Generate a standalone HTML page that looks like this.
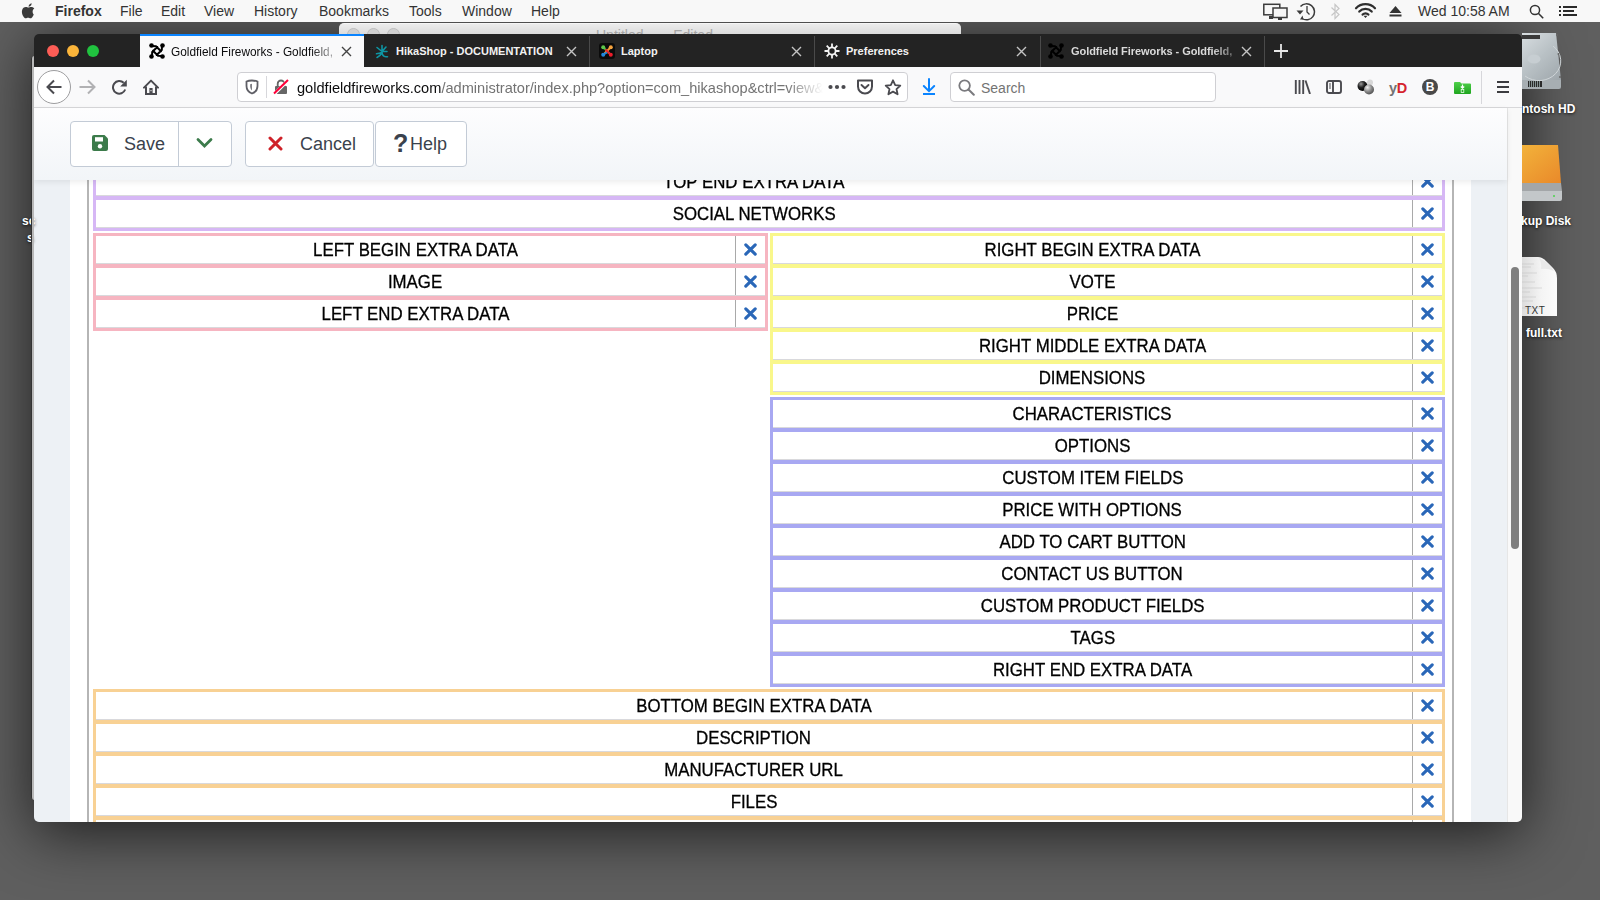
<!DOCTYPE html>
<html><head><meta charset="utf-8">
<style>
*{box-sizing:border-box;margin:0;padding:0}
html,body{width:1600px;height:900px;overflow:hidden}
body{position:relative;background:#5d5d5d;font-family:"Liberation Sans",sans-serif}
.abs{position:absolute}
#desk{position:absolute;left:0;top:22px;width:1600px;height:878px;background:#5f5f5f}
#menubar{position:absolute;z-index:5;left:0;top:0;width:1600px;height:22px;background:#f8f8f8;color:#333;font-size:14px}
#menubar span{position:absolute;top:3px;white-space:nowrap}
#bgwin{position:absolute;z-index:3;overflow:hidden;left:339px;top:23px;width:622px;height:11px;background:linear-gradient(#ececec,#dcdcdc);border-radius:5px 5px 0 0;border-top:1px solid #f6f6f6}
#bgwin i{position:absolute;top:4px;width:13px;height:13px;border-radius:50%;background:#d0d0d0;border:1px solid #bdbdbd}
#win{position:absolute;left:34px;top:34px;width:1488px;height:788px;overflow:hidden;border-radius:5px;box-shadow:0 10px 60px rgba(0,0,0,.7)}
#wi{position:absolute;left:-34px;top:-34px;width:1600px;height:900px}
#tabbar{position:absolute;left:34px;top:34px;width:1488px;height:33px;background:#232323}
.light{position:absolute;top:45px;width:12px;height:12px;border-radius:50%}
.tabt{position:absolute;top:44px;font-size:11px;font-weight:bold;color:#f2f2f2;white-space:nowrap;overflow:hidden}
.sep{position:absolute;top:36px;width:1px;height:31px;background:#4a4a4a}
.tx{position:absolute;top:45px;width:11px;height:11px}
.tx path{stroke:#c4c4c4;stroke-width:1.4;fill:none}
#navbar{position:absolute;left:34px;top:67px;width:1488px;height:41px;background:#f9f9fa;border-bottom:1px solid #d8d8da}
#urlbar{position:absolute;left:237px;top:72px;width:671px;height:30px;background:#fff;border:1px solid #cfcfd3;border-radius:4px}
#search{position:absolute;left:950px;top:72px;width:266px;height:30px;background:#fff;border:1px solid #cfcfd3;border-radius:4px}
.ico{position:absolute}
#content{position:absolute;left:34px;top:108px;width:1473px;height:714px;background:#edf1f5}
#sbar{position:absolute;left:1507px;top:108px;width:15px;height:714px;background:#f9f9f9;border-left:1px solid #e6e6e6}
#thumb{position:absolute;left:1511px;top:267px;width:8px;height:282px;background:#7f7f7f;border-radius:4px}
#toolbar{position:absolute;left:34px;top:108px;width:1473px;height:72px;background:linear-gradient(#fdfdfe,#f2f5f8);box-shadow:0 2px 6px rgba(0,0,0,.08)}
.btn{position:absolute;top:121px;height:46px;background:#fff;border:1px solid #c3cbd6;border-radius:4px;color:#3a424d;font-size:18px}
.btn span{position:absolute;top:12px;white-space:nowrap}
.grp{position:absolute;padding:3px;display:flex;flex-direction:column;gap:4px}
.row{height:28px;background:#fff;border-bottom:1px solid #d9d9dc;display:flex}
.row .t{flex:1;border-right:1px solid #a9a9a9;text-align:center;font-size:18px;line-height:29px;height:27px;color:#000;white-space:nowrap}
.row .t b{font-weight:normal;display:inline-block;transform:scaleX(0.935);-webkit-text-stroke:0.3px #000}
.row .d{width:29px;display:flex;align-items:center;justify-content:center;height:27px}
.row .d svg path{stroke:#2a67b8;stroke-width:3.1;stroke-linecap:round;fill:none}
.dlab{position:absolute;color:#fff;font-size:12px;font-weight:bold;text-shadow:0 1px 3px rgba(0,0,0,.8);white-space:nowrap}
</style></head><body>
<div id="desk"></div>
<div id="menubar">
<svg class="abs" style="left:21px;top:3px" width="14" height="16" viewBox="0 0 14 16"><path fill="#3a3a3a" d="M11.6 8.5c0-2 1.6-2.9 1.7-3-0.9-1.4-2.4-1.6-2.9-1.6-1.2-0.1-2.4 0.7-3 0.7-0.6 0-1.6-0.7-2.6-0.7C3.400 4 2.100 4.700 1.500 5.900 0.200 8.200 1.100 11.600 2.400 13.400 3 14.300 3.800 15.300 4.700 15.300c0.900 0 1.300-0.600 2.400-0.600 1.100 0 1.400 0.600 2.400 0.600 1 0 1.600-0.900 2.200-1.800 0.700-1 1-2 1-2.100C12.700 11.400 11.600 10.800 11.600 8.500zM9.800 2.600C10.300 2 10.700 1.100 10.600 0.200 9.800 0.300 8.900 0.800 8.400 1.400 7.900 2 7.500 2.800 7.600 3.700 8.500 3.800 9.300 3.200 9.800 2.600z"/></svg>
<span style="left:55px;font-weight:bold">Firefox</span>
<span style="left:120px">File</span>
<span style="left:161px">Edit</span>
<span style="left:204px">View</span>
<span style="left:254px">History</span>
<span style="left:319px">Bookmarks</span>
<span style="left:409px">Tools</span>
<span style="left:462px">Window</span>
<span style="left:531px">Help</span>
<span style="left:1418px">Wed 10:58 AM</span>
<svg class="abs" style="left:1262px;top:3px" width="26" height="17" viewBox="0 0 26 17"><rect x="1.8" y="1.3" width="16" height="10.5" fill="none" stroke="#3b3b3b" stroke-width="1.5"/><rect x="11" y="5" width="14" height="9.5" fill="#f5f5f5" stroke="#3b3b3b" stroke-width="1.5"/><rect x="7" y="13" width="4" height="3" fill="#3b3b3b"/><rect x="16" y="15" width="4" height="2" fill="#3b3b3b"/></svg>
<svg class="abs" style="left:1295px;top:2px" width="22" height="19" viewBox="0 0 22 19"><path d="M5.5 4.5A8 8 0 1 1 7 16.5" fill="none" stroke="#3b3b3b" stroke-width="1.5"/><path d="M1.5 8.5H8.5L5 12.5Z" fill="#3b3b3b"/><path d="M12 4V10L14.5 12.5" fill="none" stroke="#3b3b3b" stroke-width="1.3"/><path d="M5 17.5L7.5 13.5L8.5 17.5Z" fill="#3b3b3b"/></svg>
<svg class="abs" style="left:1330px;top:3px" width="11" height="17" viewBox="0 0 11 17"><path d="M1.5 4.5L9 11.5L5 15.5V1.5L9 5.5L1.5 12.5" fill="none" stroke="#c6c6c6" stroke-width="1.2"/></svg>
<svg class="abs" style="left:1354px;top:2px" width="23" height="17" viewBox="0 0 23 17"><g fill="none" stroke="#2f2f2f" stroke-width="2.2" stroke-linecap="round"><path d="M2 6.3A13 13 0 0 1 21 6.3"/><path d="M5.3 9.6A8.5 8.5 0 0 1 17.7 9.6"/><path d="M8.6 12.6A4 4 0 0 1 14.4 12.6"/></g><path d="M9.5 13.7L11.5 16L13.5 13.7Z" fill="#2f2f2f"/></svg>
<svg class="abs" style="left:1389px;top:5px" width="13" height="12" viewBox="0 0 13 12"><path d="M6.5 1L12.5 8H0.5Z" fill="#333"/><rect x="0.5" y="9.5" width="12" height="2" fill="#333"/></svg>
<svg class="abs" style="left:1529px;top:4px" width="16" height="16" viewBox="0 0 16 16"><circle cx="6" cy="6" r="4.6" fill="none" stroke="#333" stroke-width="1.5"/><path d="M9.3 9.3L14.2 14.2" stroke="#333" stroke-width="1.6"/></svg>
<svg class="abs" style="left:1558px;top:5px" width="20" height="12" viewBox="0 0 20 12"><g fill="#2a2a2a"><rect x="1" y="1" width="2" height="2"/><rect x="1" y="5" width="2" height="2"/><rect x="1" y="9" width="2" height="2"/><rect x="5" y="1" width="14" height="2"/><rect x="5" y="5" width="11" height="2"/><rect x="5" y="9" width="14" height="2"/></g></svg>
</div>
<div id="bgwin"><i style="left:8px"></i><i style="left:28px"></i><i style="left:48px"></i>
<span class="abs" style="left:257px;top:3px;font-size:14px;color:#a5a5a5;white-space:nowrap">Untitled <span style="margin:0 4px">&mdash;</span> Edited &#8964;</span></div>
<div class="abs" style="z-index:3;left:1522px;top:22px;width:78px;height:878px;overflow:hidden">
<svg class="abs" style="left:-11px;top:10px" width="52" height="58" viewBox="0 0 52 58"><defs><linearGradient id="hd1" x1="0" y1="0" x2="1" y2="1"><stop offset="0" stop-color="#dfe4e7"/><stop offset=".55" stop-color="#b9c1c5"/><stop offset="1" stop-color="#9ea6ab"/></linearGradient></defs><path d="M1 1H45L50 48H1Z" fill="url(#hd1)"/><path d="M1 48H50V55Q50 57 48 57H1Z" fill="#a7aeb2"/><rect x="17" y="49" width="14" height="6" fill="#2a2a2a"/><path d="M18.5 49V55M20.5 49V55M22.5 49V55M24.5 49V55M26.5 49V55M28.5 49V55" stroke="#9aa" stroke-width=".8"/><rect x="9" y="3" width="20" height="4" fill="#3a3a3a"/><path d="M42 14A20 18 0 0 1 14 44" fill="none" stroke="#cfd5d8" stroke-width="1"/><ellipse cx="23" cy="27" rx="6.5" ry="4.5" fill="#c7ced2"/><circle cx="46" cy="3" r="1" fill="#666"/><circle cx="47.5" cy="22" r="1" fill="#666"/><circle cx="49" cy="45" r="1" fill="#666"/></svg>
<svg class="abs" style="left:-8px;top:122px" width="50" height="60" viewBox="0 0 50 60"><defs><linearGradient id="bd1" x1="0" y1="0" x2="1" y2="1"><stop offset="0" stop-color="#f3b63c"/><stop offset="1" stop-color="#e9892a"/></linearGradient></defs><path d="M2 1H44L47 39H0Z" fill="url(#bd1)"/><path d="M0 39H47L48 47H0Z" fill="#a3a6a8"/><path d="M0 47H48V55Q48 57 46 57H2Q0 57 0 55Z" fill="#c3c7c9"/><circle cx="40" cy="52" r="1" fill="#4bd34b"/></svg>
<svg class="abs" style="left:-6px;top:234px" width="42" height="62" viewBox="0 0 42 62"><defs><linearGradient id="dc1" x1="0" y1="0" x2="1" y2="0"><stop offset="0" stop-color="#d6d6d6"/><stop offset=".6" stop-color="#f4f4f4"/><stop offset="1" stop-color="#fbfbfb"/></linearGradient></defs><path d="M1 1H22Q26 1 30 5L37 12Q41 16 41 22V60H1Z" fill="url(#dc1)"/><path d="M23 2Q26 8 25 13Q31 12 38 15Q34 7 23 2Z" fill="#e9e9e9"/><path d="M5 8H18M5 11H15M5 17H21M5 20H12M5 26H19M5 32H26M5 36H14M5 41H20M5 45H17M5 52H24" stroke="#bdbdbd" stroke-width=".5"/><text x="9" y="58" font-family="Liberation Sans" font-size="10" fill="#333" letter-spacing=".5">TXT</text></svg>
<div class="dlab" style="left:0px;top:80px">ntosh HD</div>
<div class="dlab" style="left:-1px;top:192px">kup Disk</div>
<div class="dlab" style="left:4px;top:304px">full.txt</div>
</div>
<div class="dlab" style="z-index:3;left:22px;top:214px;font-size:12px">sc</div><div class="dlab" style="z-index:3;left:27px;top:231px;font-size:12px">s</div>
<div class="abs" style="z-index:3;left:31px;top:56px;width:3px;height:744px;background:#b8b8b8;border-radius:4px 0 0 4px;border-left:1px solid #333"></div>
<div id="win"><div id="wi">
<div id="tabbar"></div>
<div class="light" style="left:47px;background:#fd5d56"></div>
<div class="light" style="left:67px;background:#fbb53a"></div>
<div class="light" style="left:87px;background:#20c23f"></div>
<div class="abs" style="left:140px;top:34px;width:224px;height:33px;background:#f9f9fa;border-top:2px solid #0a84ff"></div>
<svg class="ico" style="left:149px;top:43px" width="16" height="16" viewBox="0 0 16 16"><g fill="none" stroke="#000" stroke-width="2" stroke-linecap="round" stroke-linejoin="round"><path d="M2.5 3L7 3.2L12 8.3M13 2.5L12.8 7L7.7 12M13.5 13L9 12.8L4 7.7M3 13.5L3.2 9L8.3 4"/></g><g fill="#000"><circle cx="2.5" cy="2.5" r="2.3"/><circle cx="13.5" cy="2.5" r="2.3"/><circle cx="2.5" cy="13.5" r="2.3"/><circle cx="13.5" cy="13.5" r="2.3"/></g></svg>
<div class="tabt" style="left:171px;color:#0c0c0d;font-weight:normal;font-size:11.85px;top:45px;width:164px;-webkit-mask-image:linear-gradient(90deg,#000 85%,rgba(0,0,0,.4) 97%)">Goldfield Fireworks - Goldfield,</div>
<svg class="tx" style="left:341px;top:46px"><path d="M1 1L10 10M10 1L1 10" style="stroke:#444"/></svg>
<svg class="ico" style="left:374px;top:43px" width="16" height="16" viewBox="0 0 16 16"><g fill="none" stroke="#0e95a3" stroke-width="1.6" stroke-linecap="round"><path d="M8 2.5V8.5Q8 13.5 12 13.8H13.5M3 4.5L8 8.5M12 4L8 8.5M8 8.5H13M7.7 9.5Q5.5 10.5 2.5 10.8M7.5 10.5Q6 13 3 14.5"/></g></svg>
<div class="tabt" style="left:396px;top:45px">HikaShop - DOCUMENTATION</div>
<svg class="tx" style="left:566px;top:46px"><path d="M1 1L10 10M10 1L1 10"/></svg>
<div class="sep" style="left:589px"></div>
<svg class="ico" style="left:599px;top:43px" width="16" height="16" viewBox="0 0 16 16"><rect x="0" y="0" width="16" height="16" rx="3" fill="#0b0b0b"/><g fill="none" stroke-width="2" stroke-linecap="round"><path d="M4.5 4.5L10 10" stroke="#4cb83b"/><path d="M11.5 4.5L6 10" stroke="#f39b35"/><path d="M4.5 11.5L9 9" stroke="#1c7fd3"/><path d="M11.5 11.5L7 7" stroke="#e8202a"/></g><circle cx="4.2" cy="4.2" r="2" fill="#5fc54a"/><circle cx="11.8" cy="4.2" r="2" fill="#f6a33e"/><circle cx="4.2" cy="11.8" r="2" fill="#1f86dc"/><circle cx="11.8" cy="11.8" r="2" fill="#ec1c2a"/></svg>
<div class="tabt" style="left:621px;top:45px">Laptop</div>
<svg class="tx" style="left:791px;top:46px"><path d="M1 1L10 10M10 1L1 10"/></svg>
<div class="sep" style="left:814px"></div>
<svg class="ico" style="left:824px;top:43px" width="16" height="16" viewBox="0 0 16 16"><g fill="none" stroke="#f4f4f4" stroke-width="1.8"><circle cx="8" cy="8" r="3.6"/><path d="M8 0.5V4M8 12V15.5M0.5 8H4M12 8H15.5M2.7 2.7L5.3 5.3M10.7 10.7L13.3 13.3M13.3 2.7L10.7 5.3M5.3 10.7L2.7 13.3"/></g></svg>
<div class="tabt" style="left:846px;top:45px">Preferences</div>
<svg class="tx" style="left:1016px;top:46px"><path d="M1 1L10 10M10 1L1 10"/></svg>
<div class="sep" style="left:1040px"></div>
<svg class="ico" style="left:1048px;top:43px" width="16" height="16" viewBox="0 0 16 16"><g fill="none" stroke="#000" stroke-width="2" stroke-linecap="round" stroke-linejoin="round"><path d="M2.5 3L7 3.2L12 8.3M13 2.5L12.8 7L7.7 12M13.5 13L9 12.8L4 7.7M3 13.5L3.2 9L8.3 4"/></g><g fill="#000"><circle cx="2.5" cy="2.5" r="2.3"/><circle cx="13.5" cy="2.5" r="2.3"/><circle cx="2.5" cy="13.5" r="2.3"/><circle cx="13.5" cy="13.5" r="2.3"/></g></svg>
<div class="tabt" style="left:1071px;top:45px;width:166px;letter-spacing:-0.06px;color:#dadada;-webkit-mask-image:linear-gradient(90deg,#000 85%,rgba(0,0,0,.4) 97%)">Goldfield Fireworks - Goldfield,</div>
<svg class="tx" style="left:1241px;top:46px"><path d="M1 1L10 10M10 1L1 10"/></svg>
<div class="sep" style="left:1264px"></div>
<svg class="ico" style="left:1273px;top:43px" width="16" height="16"><path d="M8 1V15M1 8H15" stroke="#e8e8e8" stroke-width="1.8"/></svg>
<div id="navbar"></div>
<div class="abs" style="left:37px;top:70px;width:34px;height:34px;border-radius:50%;border:1px solid #9d9d9f;background:#fff"></div>
<svg class="ico" style="left:46px;top:79px" width="16" height="16" viewBox="0 0 16 16"><path d="M1.5 8H15.5M8 1.5L1.5 8L8 14.5" fill="none" stroke="#4a4a4f" stroke-width="2"/></svg>
<svg class="ico" style="left:79px;top:79px" width="17" height="16" viewBox="0 0 17 16"><path d="M0.5 8H15M9 1.5L15.5 8L9 14.5" fill="none" stroke="#b1b1b3" stroke-width="2"/></svg>
<svg class="ico" style="left:111px;top:79px" width="17" height="16" viewBox="0 0 17 16"><path d="M14.2 10.5A6.3 6.3 0 1 1 12.7 3.8" fill="none" stroke="#4a4a4f" stroke-width="2"/><path d="M15.8 0.8V7.5H9.2Z" fill="#4a4a4f"/></svg>
<svg class="ico" style="left:143px;top:79px" width="16" height="16" viewBox="0 0 16 16"><path d="M1 8.6L8 1.6L15 8.6" fill="none" stroke="#4a4a4f" stroke-width="2" stroke-linejoin="round" stroke-linecap="round"/><path d="M3 7.5V15H13V7.5" fill="none" stroke="#4a4a4f" stroke-width="2"/><rect x="6.4" y="9" width="3.2" height="6" fill="#4a4a4f"/><rect x="7.5" y="11" width="1" height="1.2" fill="#fff"/></svg>
<div id="urlbar"></div>
<svg class="ico" style="left:245px;top:79px" width="14" height="16" viewBox="0 0 14 16"><path d="M7 1.5Q10.5 1.5 12.5 2.5V7Q12.5 12.5 7 14.5Q1.5 12.5 1.5 7V2.5Q3.5 1.5 7 1.5Z" fill="none" stroke="#5f5f66" stroke-width="1.8"/><path d="M5.3 5.3L6.8 4.8V11.5Q5.6 10 5.3 8Z" fill="#5f5f66"/></svg>
<div class="abs" style="left:266px;top:76px;width:1px;height:22px;background:#d7d7db"></div>
<svg class="ico" style="left:273px;top:79px" width="16" height="16" viewBox="0 0 16 16"><path d="M4.7 7V4.8A3.3 3.3 0 0 1 11.3 4.8V7" fill="none" stroke="#666" stroke-width="1.8"/><rect x="2" y="7" width="12" height="8" rx="1" fill="#666"/><path d="M1.5 14.8L15 1.5" stroke="#fff" stroke-width="3.2"/><path d="M1 14.5L15 1" stroke="#ff0039" stroke-width="2"/></svg>
<div class="abs" style="left:297px;top:80px;font-size:14.6px;color:#0c0c0d;white-space:nowrap;width:526px;overflow:hidden;-webkit-mask-image:linear-gradient(90deg,#000 93%,transparent)">goldfieldfireworks.com<span style="color:#737373">/administrator/index.php?option=com_hikashop&amp;ctrl=view&amp;task=edit</span></div>
<svg class="ico" style="left:828px;top:84px" width="18" height="6"><circle cx="2.5" cy="3" r="2.1" fill="#4a4a4f"/><circle cx="9" cy="3" r="2.1" fill="#4a4a4f"/><circle cx="15.5" cy="3" r="2.1" fill="#4a4a4f"/></svg>
<svg class="ico" style="left:856px;top:79px" width="18" height="16" viewBox="0 0 18 16"><path d="M2 1.5H16V7.5A7 7 0 0 1 2 7.5Z" fill="none" stroke="#4a4a4f" stroke-width="2" stroke-linejoin="round"/><path d="M5.5 6L9 9.3L12.5 6" fill="none" stroke="#4a4a4f" stroke-width="1.9" stroke-linecap="round" stroke-linejoin="round"/></svg>
<svg class="ico" style="left:884px;top:79px" width="18" height="17" viewBox="0 0 18 17"><path d="M9 1.3L11.2 6.1L16.3 6.6L12.5 10.1L13.6 15.3L9 12.6L4.4 15.3L5.5 10.1L1.7 6.6L6.8 6.1Z" fill="none" stroke="#4a4a4f" stroke-width="1.8" stroke-linejoin="round"/></svg>
<svg class="ico" style="left:922px;top:78px" width="14" height="18" viewBox="0 0 14 18"><path d="M7 1V13M1.8 8L7 13.2L12.2 8" fill="none" stroke="#0a84ff" stroke-width="2" stroke-linecap="round"/><rect x="1" y="15" width="12" height="2" fill="#0a84ff"/></svg>
<div id="search"></div>
<svg class="ico" style="left:958px;top:79px" width="17" height="17" viewBox="0 0 17 17"><circle cx="6.6" cy="6.6" r="5.3" fill="none" stroke="#7a7a7e" stroke-width="1.8"/><path d="M10.5 10.5L15.8 15.8" stroke="#7a7a7e" stroke-width="2" stroke-linecap="round"/></svg>
<div class="abs" style="left:981px;top:80px;font-size:14px;color:#737373">Search</div>
<svg class="ico" style="left:1294px;top:80px" width="17" height="14" viewBox="0 0 17 14"><path d="M1.8 0V14M5.5 0V14M9.2 0V14M11.5 0.5L16 14" fill="none" stroke="#4a4a4f" stroke-width="1.9"/></svg>
<svg class="ico" style="left:1326px;top:80px" width="16" height="14" viewBox="0 0 16 14"><rect x="1" y="1" width="14" height="12" rx="2" fill="none" stroke="#4a4a4f" stroke-width="1.9"/><path d="M7 1V13" stroke="#4a4a4f" stroke-width="1.9"/><path d="M3 4H5M3 6H5M3 8H5" stroke="#4a4a4f" stroke-width="1"/></svg>
<svg class="ico" style="left:1357px;top:79px" width="18" height="16" viewBox="0 0 18 16"><defs><radialGradient id="gb" cx="35%" cy="30%" r="70%"><stop offset="0" stop-color="#9a9a9a"/><stop offset=".5" stop-color="#222"/><stop offset="1" stop-color="#000"/></radialGradient><radialGradient id="gg" cx="35%" cy="30%" r="70%"><stop offset="0" stop-color="#eee"/><stop offset=".6" stop-color="#888"/><stop offset="1" stop-color="#555"/></radialGradient></defs><circle cx="13" cy="3.5" r="3" fill="#d8d8d8"/><circle cx="5.5" cy="7" r="5" fill="url(#gb)"/><circle cx="12" cy="10.5" r="5" fill="url(#gg)"/></svg>
<div class="abs" style="left:1389px;top:80px;font-size:14.5px;font-weight:bold;white-space:nowrap;letter-spacing:-0.3px"><span style="color:#737373">y</span><span style="color:#d5242e">D</span></div>
<svg class="ico" style="left:1422px;top:79px" width="16" height="16" viewBox="0 0 16 16"><circle cx="8" cy="8" r="8" fill="#494949"/><text x="8" y="12.3" text-anchor="middle" font-family="Liberation Sans" font-weight="bold" font-size="12" fill="#fff">B</text></svg>
<svg class="ico" style="left:1454px;top:81px" width="17" height="13" viewBox="0 0 17 13"><defs><linearGradient id="gf" x1="0" y1="0" x2="0" y2="1"><stop offset="0" stop-color="#4fd04a"/><stop offset="1" stop-color="#1ea51e"/></linearGradient></defs><path d="M0 2Q0 1 1 1H6L7.5 2.5H16Q17 2.5 17 3.5V12Q17 13 16 13H1Q0 13 0 12Z" fill="url(#gf)"/><path d="M8.5 3.5V7M6.8 5.5L8.5 7.2L10.2 5.5" stroke="#fff" stroke-width="1.2" fill="none"/><rect x="7.2" y="8.5" width="2.6" height="3" fill="none" stroke="#e8ffe8" stroke-width=".8"/></svg>
<div class="abs" style="left:1481px;top:71px;width:1px;height:33px;background:#d7d7db"></div>
<svg class="ico" style="left:1496px;top:80px" width="14" height="14" viewBox="0 0 14 14"><path d="M1 2H13M1 7H13M1 12H13" stroke="#3c3c40" stroke-width="2"/></svg>
<div id="content">
<div class="abs" style="left:36px;top:0;width:1401px;height:715px;background:#fff"></div>
<div class="abs" style="left:53px;top:0;width:2px;height:715px;background:#b5b5b5"></div>
<div class="abs" style="left:1418px;top:0;width:2px;height:715px;background:#b5b5b5"></div>
</div>
<div id="sbar"></div><div id="thumb"></div>
<div id="rows">
<div class="grp" style="left:93px;top:165px;width:1352px;background:#d6b7f5"><div class="row"><div class="t"><b>TOP END EXTRA DATA</b></div><div class="d"><svg width="13" height="13" viewBox="0 0 13 13"><path d="M1.8 1.8L11.2 11.2M11.2 1.8L1.8 11.2"/></svg></div></div><div class="row"><div class="t"><b>SOCIAL NETWORKS</b></div><div class="d"><svg width="13" height="13" viewBox="0 0 13 13"><path d="M1.8 1.8L11.2 11.2M11.2 1.8L1.8 11.2"/></svg></div></div></div>
<div class="grp" style="left:93px;top:233px;width:675px;background:#f6b5c1"><div class="row"><div class="t"><b>LEFT BEGIN EXTRA DATA</b></div><div class="d"><svg width="13" height="13" viewBox="0 0 13 13"><path d="M1.8 1.8L11.2 11.2M11.2 1.8L1.8 11.2"/></svg></div></div><div class="row"><div class="t"><b>IMAGE</b></div><div class="d"><svg width="13" height="13" viewBox="0 0 13 13"><path d="M1.8 1.8L11.2 11.2M11.2 1.8L1.8 11.2"/></svg></div></div><div class="row"><div class="t"><b>LEFT END EXTRA DATA</b></div><div class="d"><svg width="13" height="13" viewBox="0 0 13 13"><path d="M1.8 1.8L11.2 11.2M11.2 1.8L1.8 11.2"/></svg></div></div></div>
<div class="grp" style="left:770px;top:233px;width:675px;background:#f9f78b"><div class="row"><div class="t"><b>RIGHT BEGIN EXTRA DATA</b></div><div class="d"><svg width="13" height="13" viewBox="0 0 13 13"><path d="M1.8 1.8L11.2 11.2M11.2 1.8L1.8 11.2"/></svg></div></div><div class="row"><div class="t"><b>VOTE</b></div><div class="d"><svg width="13" height="13" viewBox="0 0 13 13"><path d="M1.8 1.8L11.2 11.2M11.2 1.8L1.8 11.2"/></svg></div></div><div class="row"><div class="t"><b>PRICE</b></div><div class="d"><svg width="13" height="13" viewBox="0 0 13 13"><path d="M1.8 1.8L11.2 11.2M11.2 1.8L1.8 11.2"/></svg></div></div><div class="row"><div class="t"><b>RIGHT MIDDLE EXTRA DATA</b></div><div class="d"><svg width="13" height="13" viewBox="0 0 13 13"><path d="M1.8 1.8L11.2 11.2M11.2 1.8L1.8 11.2"/></svg></div></div><div class="row"><div class="t"><b>DIMENSIONS</b></div><div class="d"><svg width="13" height="13" viewBox="0 0 13 13"><path d="M1.8 1.8L11.2 11.2M11.2 1.8L1.8 11.2"/></svg></div></div></div>
<div class="grp" style="left:770px;top:397px;width:675px;background:#a8a8f2"><div class="row"><div class="t"><b>CHARACTERISTICS</b></div><div class="d"><svg width="13" height="13" viewBox="0 0 13 13"><path d="M1.8 1.8L11.2 11.2M11.2 1.8L1.8 11.2"/></svg></div></div><div class="row"><div class="t"><b>OPTIONS</b></div><div class="d"><svg width="13" height="13" viewBox="0 0 13 13"><path d="M1.8 1.8L11.2 11.2M11.2 1.8L1.8 11.2"/></svg></div></div><div class="row"><div class="t"><b>CUSTOM ITEM FIELDS</b></div><div class="d"><svg width="13" height="13" viewBox="0 0 13 13"><path d="M1.8 1.8L11.2 11.2M11.2 1.8L1.8 11.2"/></svg></div></div><div class="row"><div class="t"><b>PRICE WITH OPTIONS</b></div><div class="d"><svg width="13" height="13" viewBox="0 0 13 13"><path d="M1.8 1.8L11.2 11.2M11.2 1.8L1.8 11.2"/></svg></div></div><div class="row"><div class="t"><b>ADD TO CART BUTTON</b></div><div class="d"><svg width="13" height="13" viewBox="0 0 13 13"><path d="M1.8 1.8L11.2 11.2M11.2 1.8L1.8 11.2"/></svg></div></div><div class="row"><div class="t"><b>CONTACT US BUTTON</b></div><div class="d"><svg width="13" height="13" viewBox="0 0 13 13"><path d="M1.8 1.8L11.2 11.2M11.2 1.8L1.8 11.2"/></svg></div></div><div class="row"><div class="t"><b>CUSTOM PRODUCT FIELDS</b></div><div class="d"><svg width="13" height="13" viewBox="0 0 13 13"><path d="M1.8 1.8L11.2 11.2M11.2 1.8L1.8 11.2"/></svg></div></div><div class="row"><div class="t"><b>TAGS</b></div><div class="d"><svg width="13" height="13" viewBox="0 0 13 13"><path d="M1.8 1.8L11.2 11.2M11.2 1.8L1.8 11.2"/></svg></div></div><div class="row"><div class="t"><b>RIGHT END EXTRA DATA</b></div><div class="d"><svg width="13" height="13" viewBox="0 0 13 13"><path d="M1.8 1.8L11.2 11.2M11.2 1.8L1.8 11.2"/></svg></div></div></div>
<div class="grp" style="left:93px;top:689px;width:1352px;background:#f8d194"><div class="row"><div class="t"><b>BOTTOM BEGIN EXTRA DATA</b></div><div class="d"><svg width="13" height="13" viewBox="0 0 13 13"><path d="M1.8 1.8L11.2 11.2M11.2 1.8L1.8 11.2"/></svg></div></div><div class="row"><div class="t"><b>DESCRIPTION</b></div><div class="d"><svg width="13" height="13" viewBox="0 0 13 13"><path d="M1.8 1.8L11.2 11.2M11.2 1.8L1.8 11.2"/></svg></div></div><div class="row"><div class="t"><b>MANUFACTURER URL</b></div><div class="d"><svg width="13" height="13" viewBox="0 0 13 13"><path d="M1.8 1.8L11.2 11.2M11.2 1.8L1.8 11.2"/></svg></div></div><div class="row"><div class="t"><b>FILES</b></div><div class="d"><svg width="13" height="13" viewBox="0 0 13 13"><path d="M1.8 1.8L11.2 11.2M11.2 1.8L1.8 11.2"/></svg></div></div><div class="row"><div class="t"><b>BOTTOM MIDDLE EXTRA DATA</b></div><div class="d"><svg width="13" height="13" viewBox="0 0 13 13"><path d="M1.8 1.8L11.2 11.2M11.2 1.8L1.8 11.2"/></svg></div></div><div class="row"><div class="t"><b>BOTTOM END EXTRA DATA</b></div><div class="d"><svg width="13" height="13" viewBox="0 0 13 13"><path d="M1.8 1.8L11.2 11.2M11.2 1.8L1.8 11.2"/></svg></div></div></div>
</div>
<div id="toolbar"></div>
<div class="btn" style="left:70px;width:162px"><span style="left:53px">Save</span></div>
<div class="abs" style="left:178px;top:122px;width:1px;height:44px;background:#c3cbd6"></div>
<svg class="ico" style="left:92px;top:135px" width="16" height="16" viewBox="0 0 16 16"><path d="M2 0H12.5L16 3.5V14Q16 16 14 16H2Q0 16 0 14V2Q0 0 2 0Z" fill="#3c7b4b"/><rect x="3" y="2.2" width="8" height="4.3" fill="#fff"/><circle cx="8" cy="11.3" r="2.2" fill="#fff"/></svg>
<svg class="ico" style="left:196px;top:137px" width="17" height="12" viewBox="0 0 17 12"><path d="M2 2.5L8.5 9L15 2.5" fill="none" stroke="#3c7b4b" stroke-width="2.8" stroke-linecap="round"/></svg>
<div class="btn" style="left:245px;width:129px"><span style="left:54px">Cancel</span></div>
<svg class="ico" style="left:268px;top:136px" width="15" height="15" viewBox="0 0 15 15"><path d="M2 2L13 13M13 2L2 13" fill="none" stroke="#cf2229" stroke-width="3" stroke-linecap="round"/></svg>
<div class="btn" style="left:375px;width:92px"><span style="left:34px">Help</span><span style="left:17px;top:7px;font-size:25px;font-weight:bold;color:#3a424d">?</span></div>
</div></div>
</body></html>
